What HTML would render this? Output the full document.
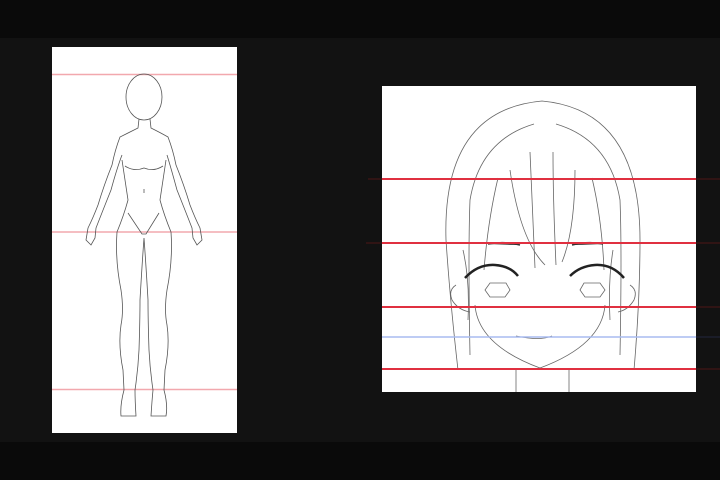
<!DOCTYPE html>
<html><head><meta charset="utf-8"><style>
html,body{margin:0;padding:0;width:720px;height:480px;overflow:hidden;background:#121212}
</style></head><body>
<svg width="720" height="480" viewBox="0 0 720 480" xmlns="http://www.w3.org/2000/svg" style="position:absolute;left:0;top:0">
<rect x="0" y="0" width="720" height="38" fill="#0a0a0a"/>
<rect x="0" y="442" width="720" height="38" fill="#0a0a0a"/>
<!-- left panel -->
<rect x="52" y="47" width="185" height="386" fill="#fff"/>
<g stroke="#f2a8ae" stroke-width="1.5">
<line x1="52" y1="74.5" x2="237" y2="74.5"/>
<line x1="52" y1="232" x2="237" y2="232"/>
<line x1="52" y1="389.5" x2="237" y2="389.5"/>
</g>
<g fill="none" stroke="#555" stroke-width="0.8">
<ellipse cx="144" cy="97" rx="18" ry="23"/>
<path d="M139 119 L138 128 Q128 133 120 137 Q115 150 112 165 Q104 185 98 205 Q93 218 88 228 L86 240 L91 245 L95 238 L96 228 Q103 210 111 190 Q117 168 122 155"/>
<path d="M150 119 L151 128 Q161 133 168 137 Q173 150 176 165 Q184 185 190 205 Q195 218 200 228 L202 240 L197 245 L193 238 L192 228 Q185 210 177 190 Q171 168 167 155"/>
<path d="M122 160 Q125 180 128 200 Q124 215 117 232 Q115 260 121 290 Q124 310 121 325 Q118 345 123 370 L124 390 Q120 405 121 416 L136 416 Q135 400 135 390 Q138 370 139 350 Q140 320 140 300 Q142 265 144 238 Q146 265 148 300 Q148 320 149 350 Q150 370 153 390 Q152 400 151 416 L166 416 Q168 405 164 390 L165 370 Q170 345 167 325 Q164 310 167 290 Q173 260 171 232 Q164 215 160 200 Q163 180 166 160"/>
<path d="M125 166 Q134 172 144 168 Q154 172 163 166"/>
<path d="M128 213 L142 234 L146 234 L159 213"/>
<path d="M144 189 L144 193"/>
</g>
<!-- right panel -->
<rect x="382" y="86" width="314" height="306" fill="#fff"/>
<g fill="none" stroke="#666" stroke-width="0.8">
<path d="M458 370 Q450 300 446 240 Q442 110 542 101 Q640 110 640 240 Q640 300 634 370"/>
<path d="M470 355 Q468 250 470 200 Q480 140 534 124"/>
<path d="M620 355 Q622 250 620 200 Q610 140 556 124"/>
<path d="M475 305 Q478 345 540 368 Q602 345 605 305"/>
<path d="M516 368 L516 392 M569 368 L569 392"/>
<path d="M530 152 Q532 200 535 268 M553 152 Q553 200 556 265"/>
<path d="M498 178 Q488 220 484 270 M592 178 Q602 220 604 270"/>
<path d="M510 170 Q520 240 545 265 M575 170 Q575 230 562 262"/>
<path d="M463 250 Q470 280 468 320 M613 250 Q608 280 610 320"/>
<path d="M456 285 Q448 290 452 300 Q458 310 470 312 M630 285 Q638 290 634 300 Q628 310 618 312"/>
<path d="M516 336 Q540 341 552 336"/>
<path d="M485 290 L490 283 L506 283 L510 290 L505 297 L490 297 Z"/>
<path d="M580 290 L584 283 L600 283 L605 290 L600 297 L585 297 Z"/>
</g>
<g fill="none" stroke="#222" stroke-width="2.5">
<path d="M465 278 Q478 264 495 265 Q510 266 518 276"/>
<path d="M570 276 Q580 266 595 265 Q612 264 624 278"/>
</g>
<g stroke="#333" stroke-width="1.6">
<path d="M488 244 Q505 241 520 245 M572 245 Q588 241 603 244"/>
</g>
<g stroke="#e03040" stroke-width="2">
<line x1="382" y1="179" x2="696" y2="179"/>
<line x1="382" y1="243" x2="696" y2="243"/>
<line x1="382" y1="307" x2="696" y2="307"/>
<line x1="382" y1="369" x2="696" y2="369"/>
</g>
<g stroke="#3a1515" stroke-width="1.5">
<line x1="368" y1="179" x2="382" y2="179"/><line x1="696" y1="179" x2="720" y2="179"/>
<line x1="366" y1="243" x2="382" y2="243"/><line x1="696" y1="243" x2="720" y2="243"/>
<line x1="696" y1="307" x2="720" y2="307"/>
<line x1="696" y1="369" x2="720" y2="369"/>
</g>
<line x1="382" y1="337" x2="696" y2="337" stroke="#a8bcf0" stroke-width="1.5"/>
<line x1="696" y1="337" x2="720" y2="337" stroke="#1c2030" stroke-width="1.5"/>
</svg>
</body></html>
